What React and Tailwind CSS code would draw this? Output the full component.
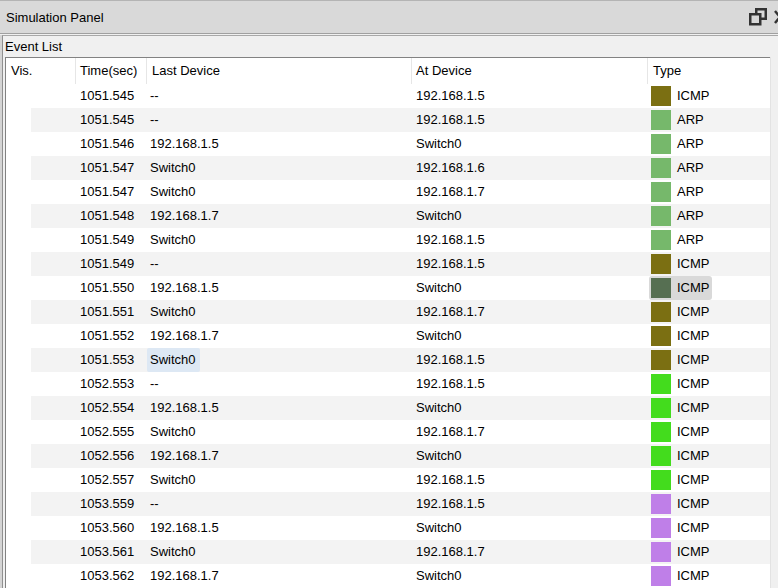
import React from "react";

const OLIVE = "#7b6f12";
const ARP = "#76b86b";
const SEL = "#566f52";
const BRIGHT = "#43dc1d";
const PURPLE = "#bf7fe8";

const rows = [
  ["1051.545", "--", "192.168.1.5", "ICMP", OLIVE],
  ["1051.545", "--", "192.168.1.5", "ARP", ARP],
  ["1051.546", "192.168.1.5", "Switch0", "ARP", ARP],
  ["1051.547", "Switch0", "192.168.1.6", "ARP", ARP],
  ["1051.547", "Switch0", "192.168.1.7", "ARP", ARP],
  ["1051.548", "192.168.1.7", "Switch0", "ARP", ARP],
  ["1051.549", "Switch0", "192.168.1.5", "ARP", ARP],
  ["1051.549", "--", "192.168.1.5", "ICMP", OLIVE],
  ["1051.550", "192.168.1.5", "Switch0", "ICMP", SEL, "type"],
  ["1051.551", "Switch0", "192.168.1.7", "ICMP", OLIVE],
  ["1051.552", "192.168.1.7", "Switch0", "ICMP", OLIVE],
  ["1051.553", "Switch0", "192.168.1.5", "ICMP", OLIVE, "last"],
  ["1052.553", "--", "192.168.1.5", "ICMP", BRIGHT],
  ["1052.554", "192.168.1.5", "Switch0", "ICMP", BRIGHT],
  ["1052.555", "Switch0", "192.168.1.7", "ICMP", BRIGHT],
  ["1052.556", "192.168.1.7", "Switch0", "ICMP", BRIGHT],
  ["1052.557", "Switch0", "192.168.1.5", "ICMP", BRIGHT],
  ["1053.559", "--", "192.168.1.5", "ICMP", PURPLE],
  ["1053.560", "192.168.1.5", "Switch0", "ICMP", PURPLE],
  ["1053.561", "Switch0", "192.168.1.7", "ICMP", PURPLE],
  ["1053.562", "192.168.1.7", "Switch0", "ICMP", PURPLE],
];

export default function App() {
  return (
    <div
      className="w-[778px] h-[588px] overflow-hidden bg-[#f0f0f0] text-[13px] text-black flex flex-col"
      style={{ fontFamily: '"Liberation Sans", Arial, sans-serif' }}
    >
      {/* Title bar */}
      <div className="h-[34px] shrink-0 bg-[#d9d9d9] border-t border-[#b4b4b4] border-b border-b-[#a0a0a0] flex items-center pl-[6px] relative">
        <span className="leading-none">Simulation Panel</span>
        <div className="ml-auto flex items-center gap-[6px] mr-[-9px]">
          <svg width="18" height="18" viewBox="0 0 18 18">
            <rect x="7.25" y="1.25" width="9.5" height="9.5" fill="none" stroke="#333" strokeWidth="2.5" />
            <rect x="1.25" y="6.25" width="10" height="10" fill="#d9d9d9" stroke="#333" strokeWidth="2.5" />
          </svg>
          <svg width="14" height="16" viewBox="0 0 14 16">
            <path d="M2 2 L12 14 M12 2 L2 14" stroke="#333" strokeWidth="2.5" />
          </svg>
        </div>
      </div>

      {/* Pane */}
      <div className="flex-1 flex flex-col mt-[1px] border-l-2 border-l-[#d4d4d4] min-h-0">
        <div className="flex-1 flex flex-col border-l border-l-[#909090] border-t border-t-[#a8a8a8] min-h-0">
          <div className="h-[21px] shrink-0 flex items-center pl-[2px]">
            <span className="leading-none">Event List</span>
          </div>
          <div className="flex-1 flex ml-[2px] min-h-0">
            <div className="w-[765px] bg-white border-l border-t border-[#828282] flex flex-col">
              {/* Header */}
              <div className="h-[26px] shrink-0 flex items-center">
                <div className="w-[69px] pl-[5px]">Vis.</div>
                <div className="w-[71px] h-full flex items-center border-l border-[#e6e6e6] pl-[4px]">Time(sec)</div>
                <div className="w-[265px] h-full flex items-center border-l border-[#e6e6e6] pl-[5px]">Last Device</div>
                <div className="w-[236px] h-full flex items-center border-l border-[#e6e6e6] pl-[4px]">At Device</div>
                <div className="w-[123px] h-full flex items-center border-l border-[#e6e6e6] pl-[5px]">Type</div>
              </div>
              {/* Rows */}
              {rows.map((r, i) => (
                <div key={i} className="h-[24px] shrink-0 flex">
                  <div className="w-[25px]" />
                  <div className={`flex-1 flex items-center ${i % 2 === 1 ? "bg-[#f3f3f3]" : "bg-white"}`}>
                    <div className="w-[44px]" />
                    <div className="w-[71px] pl-[5px]">{r[0]}</div>
                    <div className="w-[265px] h-full flex items-center">
                      <div
                        className={`h-full flex items-center ml-[1px] pl-[3px] pr-[4px] rounded-[2px] ${r[5] === "last" ? "bg-[#dde8f4]" : ""}`}
                      >
                        {r[1]}
                      </div>
                    </div>
                    <div className="w-[236px] pl-[5px]">{r[2]}</div>
                    <div className="w-[123px] h-full flex items-center">
                      <div
                        className={`h-full flex items-center ml-[2px] pl-[2px] w-[63px] rounded-[3px] ${r[5] === "type" ? "bg-[#d9d9d9]" : ""}`}
                      >
                        <div className="w-[20px] h-[20px]" style={{ backgroundColor: r[4] }} />
                        <span className="ml-[6px]">{r[3]}</span>
                      </div>
                    </div>
                  </div>
                </div>
              ))}
            </div>
            <div className="flex-1 border-l border-[#e3e3e3] bg-[#f0f0f0]" />
          </div>
        </div>
      </div>
    </div>
  );
}
